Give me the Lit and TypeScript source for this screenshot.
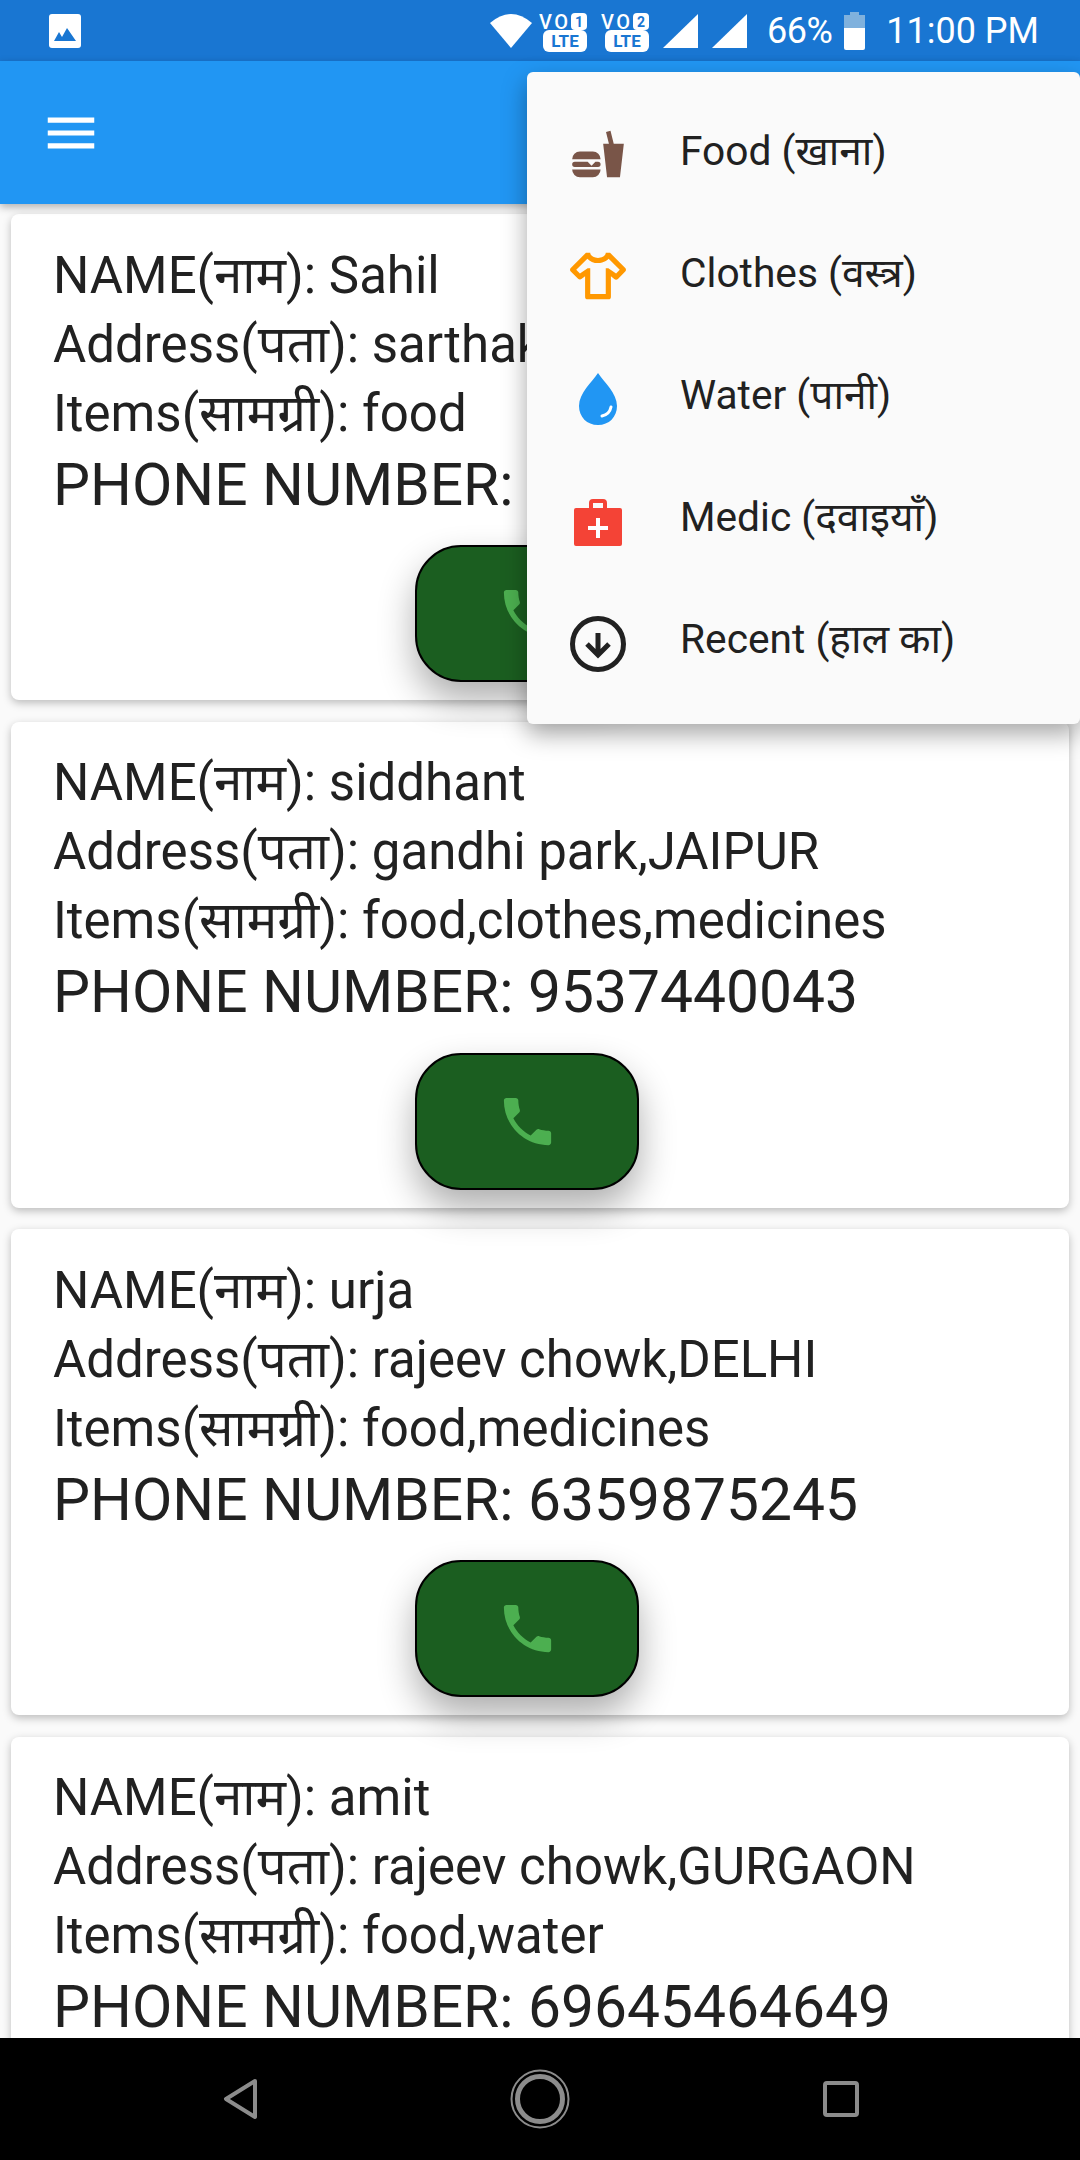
import { LitElement, html, css, svg } from 'lit';
import { customElement } from 'lit/decorators.js';

interface Donor {
  name: string;
  address: string;
  items: string;
  phone: string;
}

const DONORS: Donor[] = [
  { name: 'Sahil', address: 'sarthak nagar,JAIPUR', items: 'food', phone: '9537440012' },
  { name: 'siddhant', address: 'gandhi park,JAIPUR', items: 'food,clothes,medicines', phone: '9537440043' },
  { name: 'urja', address: 'rajeev chowk,DELHI', items: 'food,medicines', phone: '6359875245' },
  { name: 'amit', address: 'rajeev chowk,GURGAON', items: 'food,water', phone: '69645464649' },
];

const MENU = [
  {
    label: 'Food (खाना)',
    icon: svg`<svg viewBox="0 0 24 24" width="62" height="62" fill="#795548"><path d="M15.5,21L14,8H16.23L15.1,3.46L16.84,3L18.09,8H22L20.5,21H15.5M5,11H10A3,3 0 0,1 13,14H2A3,3 0 0,1 5,11M13,18A3,3 0 0,1 10,21H5A3,3 0 0,1 2,18H13M3,15H8L9.5,16.5L11,15H12A1,1 0 0,1 13,16A1,1 0 0,1 12,17H3A1,1 0 0,1 2,16A1,1 0 0,1 3,15Z"/></svg>`,
  },
  {
    label: 'Clothes (वस्त्र)',
    icon: svg`<svg viewBox="0 0 24 24" width="62" height="62" fill="#FF9800"><path d="M16,21H8A1,1 0 0,1 7,20V12.07L5.7,13.07C5.31,13.46 4.68,13.46 4.29,13.07L1.46,10.29C1.07,9.9 1.07,9.27 1.46,8.88L7.34,3H9C9,4.1 10.34,5 12,5C13.66,5 15,4.1 15,3H16.66L22.54,8.88C22.93,9.27 22.93,9.9 22.54,10.29L19.71,13.12C19.32,13.5 18.69,13.5 18.3,13.12L17,12.12V20A1,1 0 0,1 16,21M20.42,9.58L16.11,5.28C15.8,5.63 15.43,5.94 15,6.2C14.16,6.7 13.13,7 12,7C10.3,7 8.79,6.32 7.89,5.28L3.58,9.58L5,11L8,9H9V19H15V9H16L19,11L20.42,9.58Z"/></svg>`,
  },
  {
    label: 'Water (पानी)',
    icon: svg`<svg viewBox="0 0 62 62" width="62" height="62"><path fill="#2196F3" d="M31 6C25 15 12 26 12 39C12 50 20 58 31 58C42 58 50 50 50 39C50 26 37 15 31 6Z"/><path fill="none" stroke="#fff" stroke-width="3" stroke-linecap="round" d="M44 40C43 45 40 48 35 49"/></svg>`,
  },
  {
    label: 'Medic (दवाइयाँ)',
    icon: svg`<svg viewBox="0 0 62 62" width="62" height="62"><path fill="#F44336" fill-rule="evenodd" d="M22 14a4 4 0 0 1 4-4h10a4 4 0 0 1 4 4v5h13a2 2 0 0 1 2 2v34a2 2 0 0 1-2 2H9a2 2 0 0 1-2-2V21a2 2 0 0 1 2-2h13zM26 14v5h10v-5z"/><path fill="#fff" d="M29 29h4v8h8v4h-8v8h-4v-8h-8v-4h8z"/></svg>`,
  },
  {
    label: 'Recent (हाल का)',
    icon: svg`<svg viewBox="0 0 62 62" width="62" height="62"><circle cx="31" cy="33" r="25.5" fill="none" stroke="#212121" stroke-width="5"/><path fill="none" stroke="#212121" stroke-width="5" d="M31 22v21M20 33l11 11 11-11"/></svg>`,
  },
];

@customElement('app-root')
export class AppRoot extends LitElement {
  static styles = css`
    * {
      box-sizing: border-box;
    }

    :host {
      display: flex;
      flex-direction: column;
      position: relative;
      width: 1080px;
      height: 2160px;
      overflow: hidden;
      background: #fafafa;
      font-family: Roboto, 'Noto Sans', sans-serif;
      color: #212121;
    }

    .status {
      flex: none;
      height: 61px;
      background: #1976d2;
      display: flex;
      align-items: center;
      color: #fff;
      padding: 0 41px 0 49px;
    }

    .status svg {
      display: block;
      flex: none;
    }

    .status-right {
      margin-left: auto;
      display: flex;
      align-items: center;
    }

    .vo {
      width: 48px;
      height: 42px;
      margin-left: 6px;
    }

    .vo + .vo {
      margin-left: 14px;
    }

    .sig {
      margin-left: 14px;
    }

    .pct {
      font-size: 36px;
      margin-left: 20px;
      margin-right: 12px;
      letter-spacing: -0.5px;
    }

    .time {
      font-size: 36px;
      margin-left: 21px;
    }

    .bar {
      flex: none;
      height: 143px;
      background: #2196f3;
      display: flex;
      align-items: center;
      padding-left: 40px;
      box-shadow: 0 3px 8px rgba(0, 0, 0, 0.3);
      position: relative;
      z-index: 1;
    }

    .list {
      flex: 1;
      min-height: 0;
      overflow: hidden;
      padding-top: 10px;
    }

    .card {
      height: 486px;
      margin: 0 11px 21.5px;
      background: #fff;
      border-radius: 8px;
      box-shadow: 0 3px 8px rgba(0, 0, 0, 0.25);
      padding: 26.5px 42px 0;
    }

    .line {
      font-size: 51px;
      line-height: 69px;
      white-space: nowrap;
    }

    .line.phone {
      font-size: 58.7px;
      line-height: 74px;
    }

    .call-row {
      display: flex;
      justify-content: center;
      padding-right: 26px;
      margin-top: 23.5px;
    }

    .call {
      width: 224px;
      height: 137px;
      background: #1b5e20;
      border: 2.5px solid #000;
      border-radius: 46px;
      display: flex;
      align-items: center;
      justify-content: center;
      box-shadow: 0 18px 36px rgba(0, 0, 0, 0.32);
    }

    .nav {
      flex: none;
      height: 122px;
      background: #000;
      display: flex;
      align-items: center;
      position: relative;
      z-index: 1;
      padding-left: 222px;
    }

    .nav svg {
      display: block;
      flex: none;
    }

    .home {
      margin-left: 252px;
    }

    .recents {
      margin-left: 253px;
    }

    .menu {
      position: absolute;
      left: 527px;
      top: 72px;
      width: 553px;
      height: 652px;
      padding: 21px 0;
      background: #fafafa;
      border-radius: 6px;
      box-shadow: 0 10px 24px rgba(0, 0, 0, 0.35);
      z-index: 2;
    }

    .menu-item {
      height: 122px;
      display: flex;
      align-items: center;
      padding-left: 40px;
      font-size: 40.7px;
    }

    .menu-item svg {
      display: block;
      flex: none;
      margin-right: 51px;
    }

    .menu-item span {
      margin-bottom: 10px;
    }
  `;

  render() {
    return html`
      ${this.renderStatus()}
      <div class="bar">
        <svg viewBox="0 0 24 24" width="62" height="62" fill="#fff">
          <path d="M3 18h18v-2H3v2zm0-5h18v-2H3v2zm0-7v2h18V6H3z" />
        </svg>
      </div>
      <div class="list">
        ${DONORS.map(
          d => html`
            <div class="card">
              <div class="line">NAME(नाम): ${d.name}</div>
              <div class="line">Address(पता): ${d.address}</div>
              <div class="line">Items(सामग्री): ${d.items}</div>
              <div class="line phone">PHONE NUMBER: ${d.phone}</div>
              <div class="call-row">
                <div class="call">
                  <svg viewBox="0 0 24 24" width="63" height="63" fill="#4caf50">
                    <path
                      d="M6.62 10.79c1.44 2.83 3.76 5.14 6.59 6.59l2.2-2.2c.27-.27.67-.36 1.02-.24 1.12.37 2.33.57 3.57.57.55 0 1 .45 1 1V20c0 .55-.45 1-1 1-9.39 0-17-7.61-17-17 0-.55.45-1 1-1h3.5c.55 0 1 .45 1 1 0 1.25.2 2.45.57 3.57.11.35.03.74-.25 1.02l-2.2 2.2z"
                    />
                  </svg>
                </div>
              </div>
            </div>
          `
        )}
      </div>
      <div class="nav">
        <svg viewBox="0 0 36 42" width="36" height="42" fill="none" stroke="#8c8c8c" stroke-width="4" stroke-linejoin="round">
          <path d="M33 3L4 21l29 18z" />
        </svg>
        <svg class="home" viewBox="0 0 60 60" width="60" height="60" fill="none" stroke="#8c8c8c">
          <circle cx="30" cy="30" r="28.5" stroke-width="2" />
          <circle cx="30" cy="30" r="22.5" stroke-width="5" />
        </svg>
        <svg class="recents" viewBox="0 0 36 36" width="36" height="36" fill="none" stroke="#8c8c8c" stroke-width="4">
          <rect x="2" y="2" width="32" height="32" rx="2" />
        </svg>
      </div>
      <div class="menu">
        ${MENU.map(
          m => html`<div class="menu-item">${m.icon}<span>${m.label}</span></div>`
        )}
      </div>
    `;
  }

  private renderStatus() {
    const vo = (n: string) => html`
      <svg class="vo" viewBox="0 0 48 42">
        <text x="0" y="19" font-family="Roboto" font-size="20" font-weight="500" fill="#fff" textLength="29">VO</text>
        <rect x="32" y="3" width="16" height="17" rx="4" fill="#fff" />
        <text x="40" y="17" font-family="Roboto" font-size="14" font-weight="700" text-anchor="middle" fill="#1976d2">${n}</text>
        <rect x="4" y="20" width="44" height="22" rx="6" fill="#fff" />
        <text x="26" y="37" font-family="Roboto" font-size="17" font-weight="700" text-anchor="middle" fill="#1976d2">LTE</text>
      </svg>
    `;
    const signal = html`
      <svg class="sig" viewBox="0 0 35 34" width="35" height="34" fill="#fff">
        <path d="M35 0v34H0z" />
      </svg>
    `;
    return html`
      <div class="status">
        <svg viewBox="0 0 32 34" width="32" height="34">
          <rect width="32" height="34" rx="3" fill="#fff" />
          <path d="M5 27l5-9 3 5 5-9 9 13z" fill="#1976d2" />
        </svg>
        <div class="status-right">
          <svg viewBox="0 0 44 36" width="44" height="36" fill="#fff">
            <path d="M22 35L1 10Q22-8 43 10z" />
          </svg>
          ${vo('1')}${vo('2')}${signal}${signal}
          <span class="pct">66%</span>
          <svg viewBox="0 0 21 38" width="21" height="38">
            <rect x="6" y="0" width="9" height="4" fill="#7fb1dd" />
            <rect x="0" y="3" width="21" height="13" fill="#7fb1dd" />
            <path d="M0 16h21v20a2 2 0 0 1-2 2H2a2 2 0 0 1-2-2z" fill="#fff" />
          </svg>
          <span class="time">11:00 PM</span>
        </div>
      </div>
    `;
  }
}
